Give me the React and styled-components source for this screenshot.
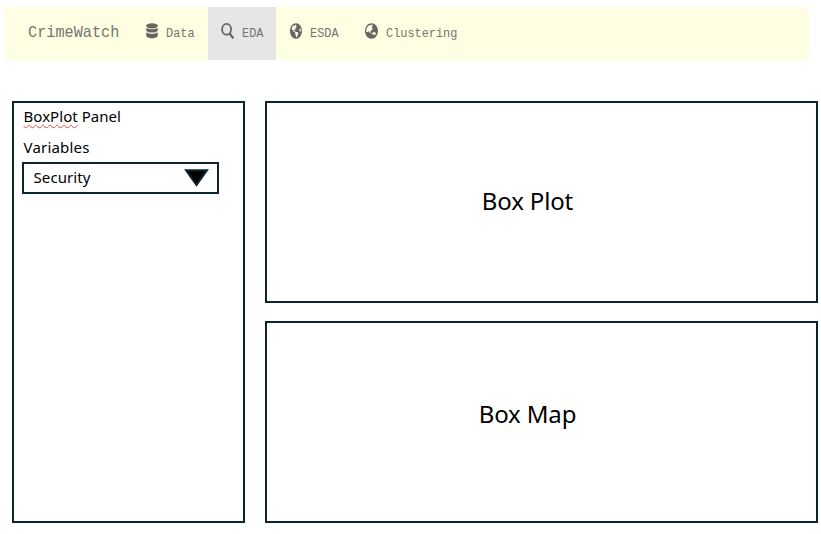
import React from "react";
import styled, { createGlobalStyle } from "styled-components";
import { FaGlobeAmericas, FaGlobeAsia } from "react-icons/fa";

const GlobalStyle = createGlobalStyle`
  * { box-sizing: border-box; }
  body { margin: 0; background: #fff; color: #000; font-family: "Noto Sans", "Open Sans", sans-serif; }
`;
const Page = styled.div`
  width: 821px;
  height: 534px;
  overflow: hidden;
  padding: 7px 3px 11px 5px;
`;
const Navbar = styled.nav`
  display: flex;
  width: 804px;
  height: 53px;
  background: #fefee2;
  color: #757570;
  font-family: "Liberation Mono", monospace;
`;
const Brand = styled.div`
  width: 127px;
  padding-left: 22.5px;
  line-height: 52px;
  font-size: 17px;
`;
const Label = styled.span`
  display: inline-block;
  transform: scaleX(${(p) => p.$stretch});
  transform-origin: left center;
  white-space: nowrap;
`;
const NavItem = styled.a`
  display: flex;
  align-items: center;
  width: ${(p) => p.$width}px;
  height: 53px;
  padding-left: ${(p) => p.$pad}px;
  background: ${(p) => (p.$active ? "#e6e6e6" : "transparent")};
  font-size: 13.5px;
`;
const IconSlot = styled.span`
  display: flex;
  flex: none;
  width: ${(p) => p.$width}px;
  height: 16px;
  margin: 0 ${(p) => p.$gap}px 5px 0;
  color: #666663;
  svg { width: 100%; height: 100%; }
`;
const Content = styled.main`
  display: grid;
  grid-template-columns: 233px 553px;
  gap: 20px;
  margin: 41px 0 0 7px;
  height: 422px;
`;
const Sidebar = styled.aside`
  border: 2px solid #0b2430;
  padding: 3px 8px;
`;
const Text = styled.div`
  height: ${(p) => p.$height}px;
  padding-left: 1.5px;
  line-height: 20px;
  font-size: 15px;
  letter-spacing: ${(p) => p.$spacing}px;
`;
const Misspelled = styled.span`
  text-decoration: underline wavy #e04848 1px;
  text-underline-offset: 2px;
  text-decoration-skip-ink: none;
`;
const Select = styled.div`
  display: flex;
  justify-content: space-between;
  align-items: center;
  width: 197px;
  height: 32px;
  padding: 0 8.5px 0 9.5px;
  border: 2px solid #0b2430;
  font-size: 15px;
  line-height: 26px;
  letter-spacing: 0.1px;
`;
const SelectValue = styled.span`
  padding-bottom: 2px;
`;
const Arrow = styled.svg`
  width: 25px;
  height: 18px;
`;
const Charts = styled.section`
  display: grid;
  grid-template-rows: 202px 202px;
  gap: 18px;
`;
const Chart = styled.div`
  display: flex;
  align-items: center;
  justify-content: center;
  padding: 0 28px ${(p) => p.$lift}px 0;
  border: 2px solid #0b2430;
  font-size: 24px;
  letter-spacing: -0.15px;
`;

const SearchIcon = () => (
  <svg viewBox="0 0 13 16" preserveAspectRatio="none" fill="none" stroke="currentColor">
    <ellipse cx="5.6" cy="6.3" rx="4.5" ry="5.4" strokeWidth="1.8" />
    <path d="M8.4 10.3 12.4 15.4" strokeWidth="2.2" />
  </svg>
);

const DatabaseIcon = () => (
  <svg viewBox="0 0 12 16" preserveAspectRatio="none" fill="currentColor">
    <ellipse cx="6" cy="2.8" rx="5.8" ry="2.6" />
    <path d="M.2 4.9Q6 7.7 11.8 4.9V7.2Q11.2 9.5 6 9.6 .8 9.5.2 7.2Z" />
    <path d="M.2 9.6Q6 12.4 11.8 9.6v3q-.6 2.7-5.8 2.8Q.8 15.3.2 12.6Z" />
  </svg>
);

const items = [
  { name: "Data", icon: <DatabaseIcon />, width: 76, pad: 14, iconWidth: 12, gap: 8 },
  { name: "EDA", icon: <SearchIcon />, width: 68, pad: 13, iconWidth: 13, gap: 8, active: true },
  { name: "ESDA", icon: <FaGlobeAmericas preserveAspectRatio="none" />, width: 75, pad: 14, iconWidth: 12, gap: 8 },
  { name: "Clustering", icon: <FaGlobeAsia preserveAspectRatio="none" />, width: 120, pad: 14, iconWidth: 13, gap: 8 },
];

export default function App() {
  return (
    <>
      <GlobalStyle />
      <Page>
        <Navbar>
          <Brand><Label $stretch={0.895}>CrimeWatch</Label></Brand>
          {items.map((i) => (
            <NavItem key={i.name} $width={i.width} $pad={i.pad} $active={i.active}>
              <IconSlot $width={i.iconWidth} $gap={i.gap}>{i.icon}</IconSlot>
              <Label $stretch={0.88}>{i.name}</Label>
            </NavItem>
          ))}
        </Navbar>
        <Content>
          <Sidebar>
            <Text $height={31} $spacing={0.05}><Misspelled>BoxPlot</Misspelled> Panel</Text>
            <Text $height={25} $spacing={0.2}>Variables</Text>
            <Select>
              <SelectValue>Security</SelectValue>
              <Arrow viewBox="0 0 25 18">
                <path d="M2 1.2h21L12.5 16Z" fill="#000" stroke="#0b2430" strokeWidth="2" />
              </Arrow>
            </Select>
          </Sidebar>
          <Charts>
            <Chart $lift={4}>Box Plot</Chart>
            <Chart $lift={18}>Box Map</Chart>
          </Charts>
        </Content>
      </Page>
    </>
  );
}
